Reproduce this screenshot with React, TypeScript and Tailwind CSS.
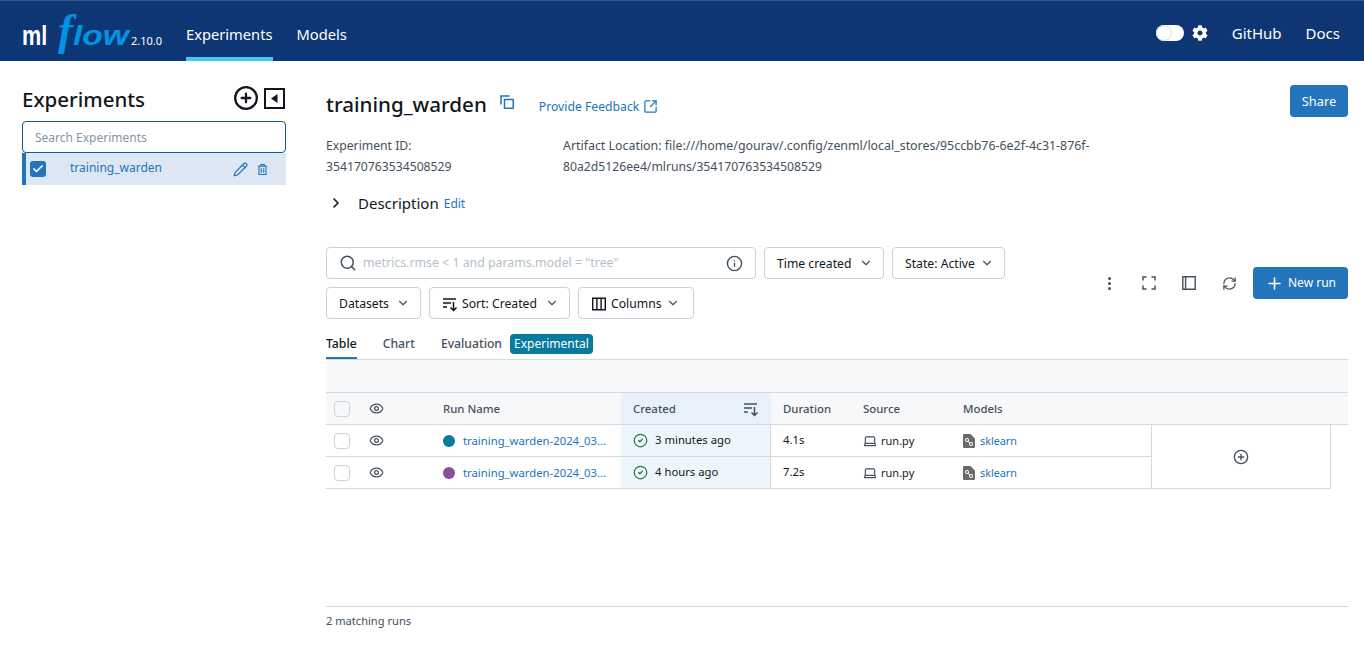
import { ChevronDown, ChevronRight, CirclePlus, CircleCheck, Eye, Info, Laptop, Pencil, Plus, RefreshCw, Search, Check, SquareArrowOutUpRight } from "lucide-react"
import { FaCog } from "react-icons/fa"

function SortIcon({ className }: { className?: string }) {
  return (
    <svg viewBox="0 0 16 16" width="16" height="16" fill="none" stroke="currentColor" strokeWidth="1.5" className={className}>
      <path d="M1 3h13M1 7h8M1 11h4M11.5 6v8.5M8.5 11.5l3 3 3-3" />
    </svg>
  )
}

function ColumnsIcon() {
  return (
    <svg viewBox="0 0 16 16" width="16" height="16" fill="none" stroke="currentColor" strokeWidth="1.4">
      <path d="M1.7 2.2h12.6v11.6H1.7zM5.9 2.2v11.6M10.1 2.2v11.6" />
    </svg>
  )
}

function CopyIcon() {
  return (
    <svg viewBox="0 0 14 14" width="14" height="14" fill="none" stroke="#2374bb" strokeWidth="1.5">
      <path d="M4.5 4.5h8.7v8.7H4.5z" />
      <path d="M9.5 1H1v8.5" />
    </svg>
  )
}

function CollapseIcon() {
  return (
    <svg viewBox="0 0 21 21" width="21" height="21">
      <rect x="1" y="1" width="19" height="19" fill="none" stroke="#11171c" strokeWidth="2" />
      <path d="M13.5 6v9L7 10.5z" fill="#11171c" />
    </svg>
  )
}

function TrashIcon() {
  return (
    <svg viewBox="0 0 12 13" width="11" height="13" fill="none" stroke="#2374bb" strokeWidth="1.2">
      <path d="M1 3h10M4 3V1.2h4V3M2.2 3v9h7.6V3M4.7 5v5M7.3 5v5" />
    </svg>
  )
}

function FullscreenIcon() {
  return (
    <svg viewBox="0 0 14 14" width="14" height="14" fill="none" stroke="#44515c" strokeWidth="1.5">
      <path d="M1 4.5V1h3.5M9.5 1H13v3.5M13 9.5V13H9.5M4.5 13H1V9.5" />
    </svg>
  )
}

function PanelIcon() {
  return (
    <svg viewBox="0 0 14 14" width="14" height="14" fill="none" stroke="#44515c" strokeWidth="1.4">
      <path d="M.8.8h12.4v12.4H.8zM3.6.8v12.4" />
    </svg>
  )
}

function ModelIcon() {
  return (
    <svg viewBox="0 0 12 14" width="12" height="14">
      <path d="M0 1a1 1 0 0 1 1-1h6.5L12 4.5V13a1 1 0 0 1-1 1H1a1 1 0 0 1-1-1z" fill="#6b6b6b" />
      <circle cx="4" cy="6" r="1.6" fill="none" stroke="#fff" strokeWidth="1" />
      <circle cx="8" cy="10" r="1.6" fill="none" stroke="#fff" strokeWidth="1" />
      <path d="M5 7l2 2" stroke="#fff" strokeWidth="1" />
    </svg>
  )
}

function FilterButton({ label, icon, className }: { label: string; icon?: React.ReactNode; className: string }) {
  return (
    <div className={`flex h-8 items-center justify-between whitespace-nowrap rounded border border-[#c9d2da] bg-white pl-3 text-[#11171c] ${className}`}>
      <span className="flex items-center gap-1 pt-[1px]">
        {icon}
        {label}
      </span>
      <ChevronDown size={14} className="text-[#44515c]" />
    </div>
  )
}

const runs = [
  { color: "bg-[#077a9d]", ago: "3 minutes ago", duration: "4.1s" },
  { color: "bg-[#8e4a9e]", ago: "4 hours ago", duration: "7.2s" },
]

export default function App() {
  return (
    <div className="flex h-[648px] w-[1364px] flex-col overflow-hidden bg-white font-['Noto_Sans',sans-serif] text-[12.2px] text-[#11171c]">
      {/* Top bar */}
      <header className="flex h-[61px] items-stretch justify-between border-t border-[#3a5a8c] bg-[#0e3675] pl-[22px] pr-6 text-white">
        <div className="flex items-stretch">
          <div className="flex w-[164px] items-baseline pt-[12px]">
            <span className="inline-block w-[36px] origin-left scale-x-[0.8] font-['Liberation_Sans',sans-serif] text-[27px] font-bold leading-[34px]">ml</span>
            <span className="font-['Liberation_Serif',serif] text-[45px] font-bold italic leading-[34px] text-[#0194e2]">f</span>
            <span className="inline-block w-[58px] origin-left scale-x-[1.2] font-['Liberation_Sans',sans-serif] text-[28px] font-bold italic leading-[34px] text-[#0194e2]">low</span>
            <span className="text-[11px]">2.10.0</span>
          </div>
          <a className="flex items-center border-b-4 border-[#43c9ed] pt-[10px] text-[14.7px]">Experiments</a>
          <a className="ml-6 flex items-center pt-[6px] text-[14.7px]">Models</a>
        </div>
        <div className="flex items-center pt-[4px]">
          <div className="flex h-4 w-7 items-center rounded-full bg-white">
            <div className="h-4 w-4 rounded-full border border-[#d5dde5] bg-white" />
          </div>
          <FaCog size={16} className="ml-2" />
          <a className="ml-6 text-[15px]">GitHub</a>
          <a className="ml-6 text-[15px]">Docs</a>
        </div>
      </header>

      <div className="flex min-h-0 flex-1">
        {/* Sidebar */}
        <aside className="ml-[22px] w-[264px] shrink-0 pt-6">
          <div className="flex h-9 items-center justify-between pb-[7px]">
            <h1 className="text-[20.5px] font-medium">Experiments</h1>
            <div className="mb-[3px] mr-px flex items-center gap-[5px]">
              <CirclePlus size={26} strokeWidth={2.1} />
              <CollapseIcon />
            </div>
          </div>
          <div className="flex h-8 items-center rounded border border-[#0e5a94] px-3 pt-[1px] text-[12px] text-[#8396a5]">Search Experiments</div>
          <div className="flex h-8 items-center border-l-[4px] border-[#2374bb] bg-[#dce7f3] pl-1 pr-[18px]">
            <div className="flex h-4 w-4 items-center justify-center rounded-[3px] bg-[#2374bb]">
              <Check size={12} strokeWidth={3.5} className="text-white" />
            </div>
            <span className="mb-[3px] ml-6 flex-1 text-[12px] text-[#2374bb]">training_warden</span>
            <Pencil size={15} className="mr-[9px] text-[#2374bb]" />
            <TrashIcon />
          </div>
        </aside>

        {/* Main */}
        <main className="ml-10 flex min-w-0 flex-1 flex-col pr-4 pt-6">
          <div className="flex h-8 items-start justify-between">
            <div className="flex items-center pt-1">
              <h2 className="text-[20.6px] font-medium">training_warden</h2>
              <span className="mb-1 ml-[13px]"><CopyIcon /></span>
              <a className="ml-[25px] mt-[5px] flex items-center text-[#2374bb]">
                Provide Feedback
                <SquareArrowOutUpRight size={15} strokeWidth={2} className="ml-1" />
              </a>
            </div>
            <button className="h-8 w-[58px] rounded bg-[#2374bb] pt-[1px] text-[12.8px] text-white">Share</button>
          </div>

          <div className="mt-[19px] flex leading-[20.6px] text-[#44515c]">
            <div className="w-[237px]">
              <div>Experiment ID:</div>
              <div>354170763534508529</div>
            </div>
            <div>
              <div className="text-[12.4px]">Artifact Location: file:///home/gourav/.config/zenml/local_stores/95ccbb76-6e2f-4c31-876f-</div>
              <div>80a2d5126ee4/mlruns/354170763534508529</div>
            </div>
          </div>

          <div className="mt-[14px] flex h-6 items-center">
            <ChevronRight size={16} strokeWidth={2.5} className="ml-[2px]" />
            <span className="ml-[14px] text-[15px]">Description</span>
            <a className="ml-[5px] mt-[2px] text-xs text-[#2374bb]">Edit</a>
          </div>

          {/* Filters */}
          <div className="mt-8 flex items-center justify-between">
            <div className="flex flex-col gap-2">
              <div className="flex gap-2">
                <div className="flex h-8 w-[430px] items-center rounded border border-[#c9d2da] px-3 text-[#b4bfc8]">
                  <Search size={18} className="text-[#44515c]" />
                  <span className="ml-[6px] flex-1 pt-[1px] text-[12.35px]">metrics.rmse &lt; 1 and params.model = "tree"</span>
                  <Info size={17} className="text-[#44515c]" />
                </div>
                <FilterButton label="Time created" className="w-[120px] pr-[10px]" />
                <FilterButton label="State: Active" className="w-[113px] pr-[10px]" />
              </div>
              <div className="flex gap-2">
                <FilterButton label="Datasets" className="w-[95px] pr-[10px]" />
                <FilterButton label="Sort: Created" icon={<SortIcon />} className="w-[141px] pr-[10px]" />
                <FilterButton label="Columns" icon={<ColumnsIcon />} className="w-[116px] pr-[13px]" />
              </div>
            </div>
            <div className="flex items-center">
              <div className="flex flex-col gap-[2px]">
                <span className="h-[3px] w-[3px] rounded-full bg-[#44515c]" />
                <span className="h-[3px] w-[3px] rounded-full bg-[#44515c]" />
                <span className="h-[3px] w-[3px] rounded-full bg-[#44515c]" />
              </div>
              <span className="ml-[31px]"><FullscreenIcon /></span>
              <span className="ml-[26px]"><PanelIcon /></span>
              <RefreshCw size={15} className="ml-[26px] text-[#44515c]" />
              <button className="ml-4 flex h-8 w-[95px] items-center justify-center gap-1 rounded bg-[#2374bb] text-[12px] text-white">
                <Plus size={19} />
                New run
              </button>
            </div>
          </div>

          {/* Tabs */}
          <div className="mt-3 flex h-[29px] items-start gap-[26px] border-b border-[#d5dadf] pt-[1px] leading-6">
            <span className="h-[27px] border-b-2 border-[#2374bb] font-medium">Table</span>
            <span className="font-medium text-[#44515c]">Chart</span>
            <span className="flex items-center font-medium text-[#44515c]">
              Evaluation
              <span className="-mt-[1px] ml-2 h-5 rounded bg-[#077a9d] px-1 text-[12px] font-normal leading-5 text-white">Experimental</span>
            </span>
          </div>

          {/* Table */}
          <div className="h-[33px] border-b border-[#d5dadf] bg-[#f7f8f9]" />
          <div className="flex h-8 items-center border-b border-[#d5dadf] bg-[#f7f8f9] text-[11.4px] font-medium text-[#44515c]">
            <div className="flex w-[117px] items-center pl-2">
              <span className="h-4 w-4 rounded-sm border border-[#c9d2da]" />
              <Eye size={15} className="ml-[19px]" />
            </div>
            <div className="w-[178px]">Run Name</div>
            <div className="flex h-full w-[150px] items-center justify-between bg-[#e8f1fa] px-3">
              Created
              <SortIcon />
            </div>
            <div className="w-[92px] pl-3">Duration</div>
            <div className="w-[100px]">Source</div>
            <div>Models</div>
          </div>
          <div className="flex">
            <div className="w-[825px]">
              {runs.map((run) => (
                <div key={run.duration} className="flex h-8 items-center border-b border-[#d5dadf] text-[11.3px]">
                  <div className="flex w-[117px] items-center pl-2">
                    <span className="h-4 w-4 rounded-sm border border-[#c9d2da]" />
                    <Eye size={15} className="ml-[19px] text-[#44515c]" />
                  </div>
                  <div className="flex w-[178px] items-center">
                    <span className={`h-3 w-3 rounded-full ${run.color}`} />
                    <a className="ml-2 mt-[1px] text-[#2374bb]">training_warden-2024_03...</a>
                  </div>
                  <div className="flex h-full w-[150px] items-center border-r border-[#d5dadf] bg-[#eef6fd] pl-3">
                    <CircleCheck size={15} className="text-[#277c43]" />
                    <span className="ml-[7px]">{run.ago}</span>
                  </div>
                  <div className="w-[92px] pl-3">{run.duration}</div>
                  <div className="flex w-[100px] items-center">
                    <Laptop size={14} className="text-[#44515c]" />
                    <span className="ml-1 mt-[1px] text-[11px]">run.py</span>
                  </div>
                  <div className="flex items-center">
                    <ModelIcon />
                    <a className="ml-[5px] mt-[1px] text-[10.8px] text-[#2374bb]">sklearn</a>
                  </div>
                </div>
              ))}
            </div>
            <div className="flex h-16 w-[180px] items-center justify-center border-x border-b border-[#d5dadf]">
              <CirclePlus size={16} className="text-[#44515c]" />
            </div>
          </div>

          <div className="flex-1" />
          <div className="h-[42px] border-t border-[#d5dadf] pt-[6px] text-[11.1px] text-[#44515c]">2 matching runs</div>
        </main>
      </div>
    </div>
  )
}
